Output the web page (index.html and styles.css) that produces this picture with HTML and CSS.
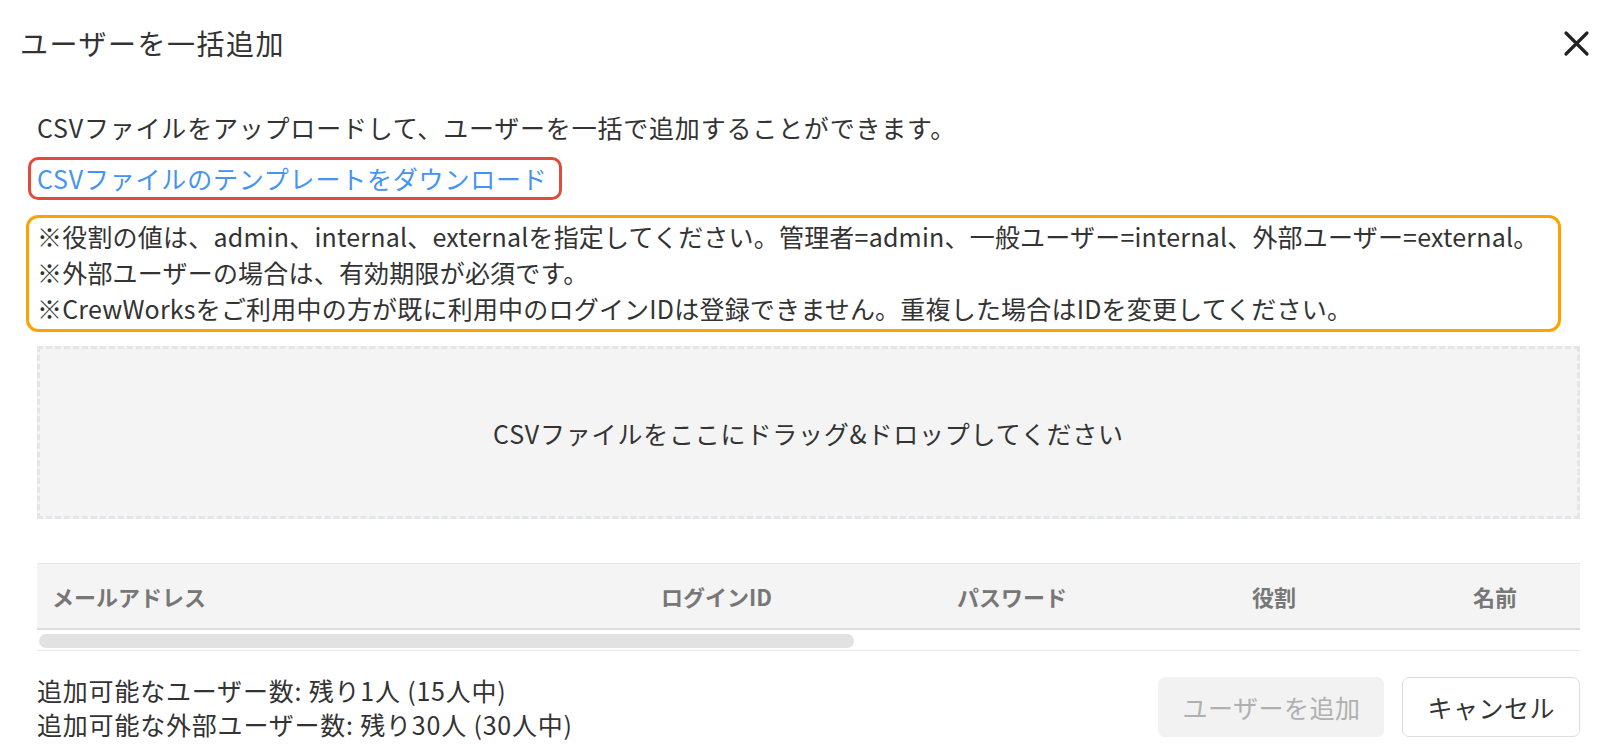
FILE: index.html
```html
<!DOCTYPE html>
<html lang="ja">

<head>
    <meta charset="UTF-8">
    <meta name="viewport" content="width=device-width, initial-scale=1.0">
    <title>ユーザーを一括追加</title>
    <link rel="stylesheet" href="styles.css">
</head>

<body>

    <div class="dialog">
        <div class="dialog-header">
            <h1>ユーザーを一括追加</h1>
            <button class="close-btn" aria-label="閉じる">
                <svg width="27" height="27" viewBox="0 0 27 27">
                    <path d="M3 3 L24 24 M24 3 L3 24" stroke="#222" stroke-width="3.2" stroke-linecap="round" />
                </svg>
            </button>
        </div>

        <div class="dialog-body">
            <p class="lead">CSVファイルをアップロードして、ユーザーを一括で追加することができます。</p>

            <div class="link-row">
                <a class="template-link" href="#">CSVファイルのテンプレートをダウンロード</a>
            </div>

            <div class="notes">
                <p>※役割の値は、admin、internal、externalを指定してください。管理者=admin、一般ユーザー=internal、外部ユーザー=external。</p>
                <p>※外部ユーザーの場合は、有効期限が必須です。</p>
                <p>※CrewWorksをご利用中の方が既に利用中のログインIDは登録できません。重複した場合はIDを変更してください。</p>
            </div>

            <div class="dropzone">
                CSVファイルをここにドラッグ&amp;ドロップしてください
            </div>

            <div class="user-table">
                <div class="table-head">
                    <div class="th">メールアドレス</div>
                    <div class="th">ログインID</div>
                    <div class="th">パスワード</div>
                    <div class="th">役割</div>
                    <div class="th">名前</div>
                </div>
                <div class="table-scroll">
                    <div class="scroll-thumb"></div>
                </div>
            </div>

            <div class="dialog-footer">
                <div class="limits">
                    <p>追加可能なユーザー数: 残り1人 (15人中)</p>
                    <p>追加可能な外部ユーザー数: 残り30人 (30人中)</p>
                </div>
                <div class="actions">
                    <button class="btn btn-primary" disabled>ユーザーを追加</button>
                    <button class="btn btn-default">キャンセル</button>
                </div>
            </div>
        </div>
    </div>

</body>

</html>
```

FILE: styles.css
```css
body {
    margin: 0;
    background-color: #ffffff;
    color: #333333;
    font-family: 'Noto Sans CJK JP', 'Noto Sans', sans-serif;
    font-size: 25px;
    letter-spacing: 0.8px;
}

p {
    margin: 0;
}

.dialog {
    width: 1619px;
}

.dialog-header {
    display: flex;
    align-items: center;
    justify-content: space-between;
    height: 86px;
    padding: 0 29px 0 20px;
}

.dialog-header h1 {
    margin: 0;
    font-size: 28px;
    font-weight: normal;
    letter-spacing: 1.5px;
    color: #333333;
}

.close-btn {
    display: flex;
    padding: 0;
    border: none;
    background: none;
}

.dialog-body {
    padding: 0 39px 0 37px;
}

.lead {
    margin-top: 23px;
    line-height: 36px;
}

.link-row {
    display: flex;
    margin-top: 12px;
}

.template-link {
    margin-left: -9px;
    padding: 0 11px 0 6px;
    line-height: 37px;
    border: 3px solid #e24b3b;
    border-radius: 10px;
    color: #4593f2;
    text-decoration: none;
}

.notes {
    margin: 15px 19px 0 -11px;
    padding: 0 8px 3px;
    border: 3px solid #ffa200;
    border-radius: 12px;
    line-height: 36px;
    letter-spacing: 0.2px;
    white-space: nowrap;
}

.dropzone {
    display: flex;
    align-items: center;
    justify-content: center;
    height: 173px;
    box-sizing: border-box;
    margin-top: 14px;
    border: 3px dashed #e3e5e9;
    background-color: #f4f4f4;
    color: #333333;
}

.user-table {
    margin-top: 44px;
}

.table-head {
    display: grid;
    grid-template-columns: 609px 296px 295px 221px 1fr;
    height: 64px;
    align-items: center;
    border-top: 1px solid #e6e6e6;
    border-bottom: 2px solid #dcdcdc;
    background-color: #f4f4f4;
}

.th {
    padding-left: 15px;
    font-size: 22px;
    font-weight: bold;
    letter-spacing: 0;
    color: #777777;
}

.table-scroll {
    padding: 4px 0 2px 2px;
    border-bottom: 1px solid #e6e6e6;
}

.scroll-thumb {
    width: 815px;
    height: 14px;
    border-radius: 7px;
    background-color: #e2e2e2;
}

.dialog-footer {
    display: flex;
    align-items: center;
    justify-content: space-between;
    margin-top: 22px;
}

.limits {
    line-height: 34px;
}

.actions {
    display: flex;
    gap: 18px;
}

.btn {
    height: 60px;
    padding: 0 24px;
    border-radius: 7px;
    font-family: inherit;
    font-size: 25px;
    letter-spacing: 0.5px;
}

.btn-primary {
    border: none;
    background-color: #f2f2f2;
    color: #b0b0b0;
}

.btn-default {
    border: 1px solid #dddddd;
    background-color: #ffffff;
    color: #333333;
}
```
